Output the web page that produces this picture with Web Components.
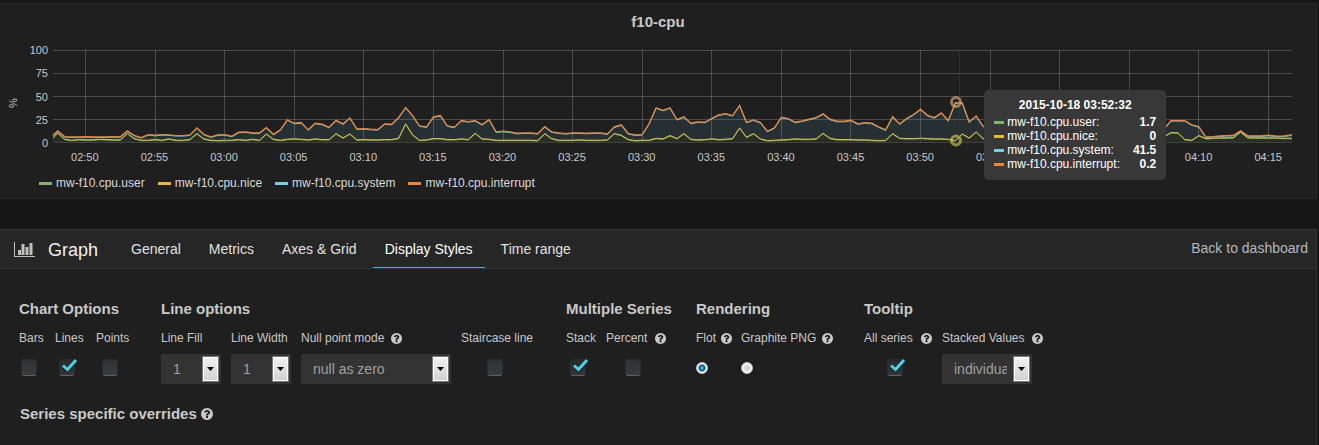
<!DOCTYPE html>
<html lang="en">
<head>
<meta charset="utf-8">
<title>f10-cpu - Graph editor</title>
<style>
  html { background: #161616; }
  body {
    margin: 0; padding: 3px 2px 0 0; min-height: 100vh; box-sizing: border-box;
    display: flex; flex-direction: column; gap: 30px;
    font-family: "Liberation Sans", Arial, sans-serif; font-size: 12px; color: #c8c8c8;
  }
  panel-editor { flex: 1; }
</style>
</head>
<body>
<graph-panel heading="f10-cpu" unit="%">
  <legend-item color="#7eb26d">mw-f10.cpu.user</legend-item>
  <legend-item color="#eab839">mw-f10.cpu.nice</legend-item>
  <legend-item color="#6ed0e0">mw-f10.cpu.system</legend-item>
  <legend-item color="#ef843c">mw-f10.cpu.interrupt</legend-item>
</graph-panel>

<panel-editor heading="Graph">
  <editor-tab slot="tabs">General</editor-tab>
  <editor-tab slot="tabs">Metrics</editor-tab>
  <editor-tab slot="tabs">Axes &amp; Grid</editor-tab>
  <editor-tab slot="tabs" active>Display Styles</editor-tab>
  <editor-tab slot="tabs">Time range</editor-tab>

  <option-group heading="Chart Options" width="112">
    <check-field label="Bars" width="26"></check-field>
    <check-field label="Lines" width="31" checked></check-field>
    <check-field label="Points" width="35"></check-field>
  </option-group>
  <option-group heading="Line options" width="375">
    <select-field label="Line Fill" width="60" value="1"></select-field>
    <select-field label="Line Width" width="60" value="1"></select-field>
    <select-field label="Null point mode" width="150" value="null as zero" help></select-field>
    <check-field label="Staircase line" width="75"></check-field>
  </option-group>
  <option-group heading="Multiple Series" width="100">
    <check-field label="Stack" width="30" checked></check-field>
    <check-field label="Percent" width="60" help></check-field>
  </option-group>
  <option-group heading="Rendering" width="138">
    <radio-field label="Flot" width="35" checked help></radio-field>
    <radio-field label="Graphite PNG" width="92" help></radio-field>
  </option-group>
  <option-group heading="Tooltip" width="178">
    <check-field label="All series" width="68" checked help></check-field>
    <select-field label="Stacked Values" width="90" value="individual" help></select-field>
  </option-group>
  <span slot="overrides">Series specific overrides</span>
</panel-editor>

<script>
const define = (name, cls) => customElements.define(name, cls);

class Base extends HTMLElement {
  connectedCallback() {
    if (this.shadowRoot) return;
    this.attachShadow({ mode: 'open' }).innerHTML = this.render();
  }
  attr(name) { return this.getAttribute(name) || ''; }
}

define('help-icon', class extends Base {
  render() {
    return `<style>:host{display:block;width:11px;height:11px;color:#c8c8c8;flex:none}svg{display:block;width:100%;height:100%}</style>
    <svg viewBox="128 128 1536 1536" fill="currentColor" aria-hidden="true"><path d="M1024 1376v-192q0-14-9-23t-23-9h-192q-14 0-23 9t-9 23v192q0 14 9 23t23 9h192q14 0 23-9t9-23zm256-672q0-88-55.5-163t-138.5-116-170-41q-243 0-371 213-15 24 8 42l132 100q7 6 19 6 16 0 25-12 53-68 86-92 34-24 86-24 48 0 85.5 26t37.5 59q0 38-20 61t-68 45q-63 28-115.5 86.5t-52.5 125.5v36q0 14 9 23t23 9h192q14 0 23-9t9-23q0-19 21.5-49.5t54.5-49.5q32-18 49-28.5t46-35 44.5-48 28-60.5 12.5-81zm384 192q0 209-103 385.5t-279.5 279.5-385.5 103-385.5-103-279.5-279.5-103-385.5 103-385.5 279.5-279.5 385.5-103 385.5 103 279.5 279.5 103 385.5z"/></svg>`;
  }
});

define('legend-item', class extends Base {
  render() {
    return `<style>:host{display:flex;align-items:center;gap:4px;line-height:16px;color:#d8d9da}
    i{width:13px;height:3px;background:${this.attr('color')}}</style><i></i><span><slot></slot></span>`;
  }
});

// Stacked readings, one every 30 seconds; 276 units are 100 %.
const TOTAL = [35,18,17,17,18,17,17,17,18,17,35,22,15,24,22,24,23,21,21,23,44,25,17,23,24,19,31,32,29,29,
  45,25,38,68,58,60,38,58,55,46,67,56,74,41,42,40,39,56,55,75,105,81,50,47,77,81,50,46,66,63,
  66,54,69,32,34,32,28,29,29,27,48,32,29,27,29,29,28,29,29,26,47,53,27,23,24,57,104,97,104,69,
  77,58,62,61,73,83,87,81,112,61,68,60,34,44,76,72,61,65,70,75,86,70,64,64,67,56,60,58,47,38,
  78,56,72,84,100,82,75,89,66,120,119,62,80,49,46,52,60,50,44,48,55,60,52,46,50,44,40,48,52,46,
  40,44,50,46,42,40,44,46,40,41,66,66,66,53,48,17,18,20,21,22,35,21,20,20,22,20,19,22,23];
const USER = [29,10,7,9,8,8,10,9,8,8,28,12,7,7,9,7,11,7,7,9,27,11,7,6,7,7,9,7,10,7,
  26,10,7,10,11,10,8,11,9,9,27,14,26,8,9,8,8,9,9,13,56,23,7,8,12,12,9,9,11,9,
  28,11,10,7,7,7,7,7,7,6,27,12,7,7,7,8,7,7,7,8,27,22,9,6,7,7,13,11,21,12,
  27,10,8,9,11,9,10,12,44,16,27,11,6,7,8,9,11,10,10,11,28,13,9,9,9,8,8,7,6,7,
  27,13,12,12,13,12,11,11,10,6,26,14,32,12,10,8,9,8,9,8,28,10,9,9,8,9,8,9,10,9,
  27,12,9,9,8,9,9,10,9,18,30,29,9,7,21,12,13,14,14,15,32,15,14,14,14,14,13,13,13];
const W = 1239, H = 93;
const pts = (data, first, dy) => `0,${(92.5 - first / 3 + dy).toFixed(1)} ` +
  data.map((v, k) => `${Math.min(W, 4.7 + k * 6.958).toFixed(1)},${(92.5 - v / 3 + dy).toFixed(1)}`).join(' ');

define('series-plot', class extends Base {
  render() {
    const rows = [0, 1, 2, 3, 4].map(i => `M0 ${i * 23 + .5}H${W}`).join('');
    const cols = Array.from({ length: 18 }, (_, i) => `M${Math.floor(32.6 + i * 69.58) + .5} 0V${H}`).join('');
    const top = pts(TOTAL, 22, 0), low = pts(USER, 14, 0);
    return `<style>:host{display:block}svg{display:block;width:100%;height:${H}px;overflow:visible}
      polyline,path{fill:none;vector-effect:non-scaling-stroke}</style>
    <svg viewBox="0 0 ${W} ${H}" preserveAspectRatio="none" role="img" aria-label="CPU use over time">
      <path d="${rows}${cols}" stroke="#fff" stroke-opacity=".2"/>
      <polygon points="0,92.5 ${top} ${W},92.5" fill="#6ed0e0" fill-opacity=".1"/>
      <polygon points="0,92.5 ${low} ${W},92.5" fill="#2a2d22" fill-opacity=".8"/>
      <polyline points="${pts(USER, 14, .5)}" stroke="#7eb26d"/>
      <polyline points="${low}" stroke="#d8bc48"/>
      <polyline points="${pts(TOTAL, 22, .6)}" stroke="#6ed0e0"/>
      <polyline points="${top}" stroke="#ef843c" stroke-width="1.2"/>
      <path d="M906.5 0V${H}" stroke="#aa0000" stroke-opacity=".8"/>
      <circle cx="903" cy="52" r="4.5" fill="none" stroke="#dca97c" stroke-width="3" stroke-opacity=".65"/>
      <circle cx="903" cy="90.5" r="4.5" fill="none" stroke="#d2c84e" stroke-width="3" stroke-opacity=".65"/>
    </svg>`;
  }
});

define('graph-tooltip', class extends Base {
  render() {
    const rows = [['user', '1.7', '#7eb26d'], ['nice', '0', '#eab839'], ['system', '41.5', '#6ed0e0'], ['interrupt', '0.2', '#ef843c']];
    return `<style>:host{display:block;box-sizing:border-box;width:182px;padding:7px 10px 9px;border-radius:5px;
      background:#383838;color:#fff;line-height:14px}
      b{display:block;text-align:center;line-height:16px;margin-bottom:2px}
      dl{display:grid;grid-template-columns:10px 1fr auto;column-gap:3px;align-items:center;margin:0}
      i{height:3px}dt,dd{margin:0;white-space:nowrap}dd{font-weight:bold;text-align:right}
      section{min-height:74px}</style>
    <section><b>2015-10-18 03:52:32</b>
    <dl>${rows.map(([n, v, c]) => `<i style="background:${c}"></i><dt>mw-f10.cpu.${n}:</dt><dd>${v}</dd>`).join('')}</dl></section>`;
  }
});

define('graph-panel', class extends Base {
  render() {
    // The ticks that lie wholly behind the tooltip carry no label.
    const covered = [240, 245];
    const times = Array.from({ length: 18 }, (_, i) => {
      const m = 170 + i * 5;
      return `<span>${covered.includes(m) ? '' : `0${Math.floor(m / 60)}:${String(m % 60).padStart(2, '0')}`}</span>`;
    }).join('');
    return `<style>
      :host{display:block;background:#1f1f1f;border:solid #292929;border-width:1px 1px 1px 0}
      h2{margin:0;font-size:15px;line-height:36px;text-align:center}
      .chart{display:grid;grid-template-columns:21px 27px minmax(0,1fr);grid-template-rows:107px 14px;
        margin:3px 24px 0 0;font-size:11px;line-height:14px}
      .unit{grid-row:1/3;writing-mode:vertical-rl;transform:rotate(180deg);text-align:center;line-height:16px;justify-self:end}
      .y{display:flex;flex-direction:column;justify-content:space-between;text-align:right}
      .plot{position:relative;margin:7px 0 7px 5px}
      .x{grid-column:3;display:grid;grid-template-columns:repeat(18,1fr);margin:0 -11px 0 2px;text-align:center}
      graph-tooltip{position:absolute;left:calc(75% + 2px);top:40px;font-size:12px}
      .legend{display:flex;gap:13px;padding:11px 0 7px 39px}
    </style>
    <h2>${this.attr('heading')}</h2>
    <div class="chart">
      <span class="unit">${this.attr('unit')}</span>
      <div class="y"><span>100</span><span>75</span><span>50</span><span>25</span><span>0</span></div>
      <div class="plot"><series-plot></series-plot><graph-tooltip></graph-tooltip></div>
      <div class="x">${times}</div>
    </div>
    <div class="legend"><slot></slot></div>`;
  }
});

define('editor-tab', class extends Base {
  render() {
    const on = this.hasAttribute('active');
    return `<style>:host{display:flex}
      button{all:unset;box-sizing:border-box;height:38px;padding:0 12px;font-size:14px;cursor:pointer;white-space:nowrap;
        color:${on ? '#fff' : '#e0e0e0'};border-bottom:1px solid ${on ? '#33b5e5' : 'transparent'}}</style>
      <button role="tab" aria-selected="${on}"><slot></slot></button>`;
  }
});

define('option-group', class extends Base {
  render() {
    return `<style>:host{display:block;width:${this.attr('width')}px;flex:none}
      h3{margin:0 0 12px;font-size:15px;line-height:18px;white-space:nowrap}
      div{display:flex;gap:10px}</style><h3>${this.attr('heading')}</h3><div><slot></slot></div>`;
  }
});

class Field extends Base {
  render() {
    return `<style>
      :host{display:block;width:${this.attr('width')}px;flex:none}
      .label{display:flex;align-items:center;justify-content:${this.labelAlign};gap:5px;height:16px;margin-bottom:8px}
      label{white-space:nowrap;line-height:16px}
      input{appearance:none;box-sizing:border-box;margin:0;display:block}
      .control{display:flex;align-items:center;height:26px}
      ${this.styles}</style>
      <div class="label"><label for="c">${this.attr('label')}</label>${this.hasAttribute('help') ? '<help-icon></help-icon>' : ''}</div>
      ${this.control()}`;
  }
  get labelAlign() { return 'space-between'; }
  get checkedAttr() { return this.hasAttribute('checked') ? 'checked' : ''; }
}

define('check-field', class extends Field {
  get styles() {
    return `.control{justify-content:center;padding-right:7px}
      .box{display:grid;width:16px}.box>*{grid-area:1/1}
      input{width:16px;height:17px;border-radius:3px;border:1px solid #292b2c;border-bottom-color:#56616a;
        background:linear-gradient(#303132,#3a3b3c)}
      input:checked{background:linear-gradient(#282a2b,#333637)}
      svg{width:16px;height:14px;margin-left:3px;pointer-events:none;display:none;z-index:1;overflow:visible}
      input:checked+svg{display:block}`;
  }
  control() {
    return `<div class="control"><span class="box"><input id="c" type="checkbox" ${this.checkedAttr}>
      <svg viewBox="0 0 16 14"><path d="M1 7.500L5.500 11L14 1.500" fill="none" stroke="#1c2022" stroke-width="5" opacity=".5"/><path d="M1 6.500L5.500 10.500L14 1" fill="none" stroke="#4dd0e8" stroke-width="3"/></svg></span></div>`;
  }
});

define('radio-field', class extends Field {
  get styles() {
    return `.control{height:28px}
      input{width:12px;height:12px;border-radius:50%;border:1px solid #c4c4c4;background:radial-gradient(#d4d4d4 20%,#fafafa 70%)}
      input:checked{background:radial-gradient(circle at 50% 50%,#5fc4ee 0,#1c77ad 2px,#124a70 3px,#f4f4f4 4px)}`;
  }
  control() { return `<div class="control"><input id="c" type="radio" ${this.checkedAttr}></div>`; }
});

define('select-field', class extends Field {
  get labelAlign() { return 'flex-start'; }
  get styles() {
    return `.label{gap:7px}.wrap{display:grid;align-items:center}.wrap>*{grid-area:1/1}
      select{appearance:none;box-sizing:border-box;width:100%;height:30px;margin:0;border:0;border-radius:1px;
        padding:0 25px 0 12px;background:#333;color:#a0a0a0;font:14px/20px "Liberation Sans",Arial,sans-serif;text-overflow:clip}
      .arrow{justify-self:end;box-sizing:border-box;width:17px;height:26px;margin-right:2px;pointer-events:none;z-index:1;
        display:grid;place-items:center;border:1px solid #777;background:linear-gradient(#f2f2f2,#d0d0d0);box-shadow:inset 0 0 0 1px #fff}
      svg{width:7px;height:4px;display:block}`;
  }
  control() {
    return `<div class="wrap"><select id="c"><option>${this.attr('value')}</option></select>
      <span class="arrow"><svg viewBox="0 0 7 4"><path d="M0 0h7L3.500 4z" fill="#000"/></svg></span></div>`;
  }
});

define('panel-editor', class extends Base {
  render() {
    return `<style>
      :host{display:block;background:#1f1f1f;border:solid #333;border-width:1px 1px 0 0}
      header{display:flex;align-items:center;height:38px;background:#262626;border-bottom:1px solid #333;padding:0 8px 0 14px}
      .icon{width:21px;height:15px;margin-right:13px}
      h1{margin:2px 21px 0 0;font-size:18px;font-weight:normal;line-height:24px;color:#f0f0f0}
      nav{display:flex;gap:4px}
      a{margin-left:auto;font-size:14px;line-height:20px;padding-bottom:2px;color:#b4b8ba;text-decoration:none}
      .groups{display:flex;gap:30px;padding:31px 0 21px 19px}
      h3{display:flex;align-items:center;gap:4px;margin:0;padding-left:20px;font-size:15px;line-height:18px}
      h3 help-icon{width:12px;height:12px}
    </style>
    <header>
      <svg class="icon" viewBox="0 0 21 15" fill="#c0c0bc" aria-hidden="true"><path d="M0 0h1v14h20v1H0zM4 8h3v5H4zM7.500 2h3v11h-3zM11.500 5h3v8h-3zM15.500 1h3v12h-3z"/></svg>
      <h1>${this.attr('heading')}</h1>
      <nav role="tablist"><slot name="tabs"></slot></nav>
      <a href="#dashboard">Back to dashboard</a>
    </header>
    <div class="groups"><slot></slot></div>
    <h3><slot name="overrides"></slot><help-icon></help-icon></h3>`;
  }
});
</script>
</body>
</html>
